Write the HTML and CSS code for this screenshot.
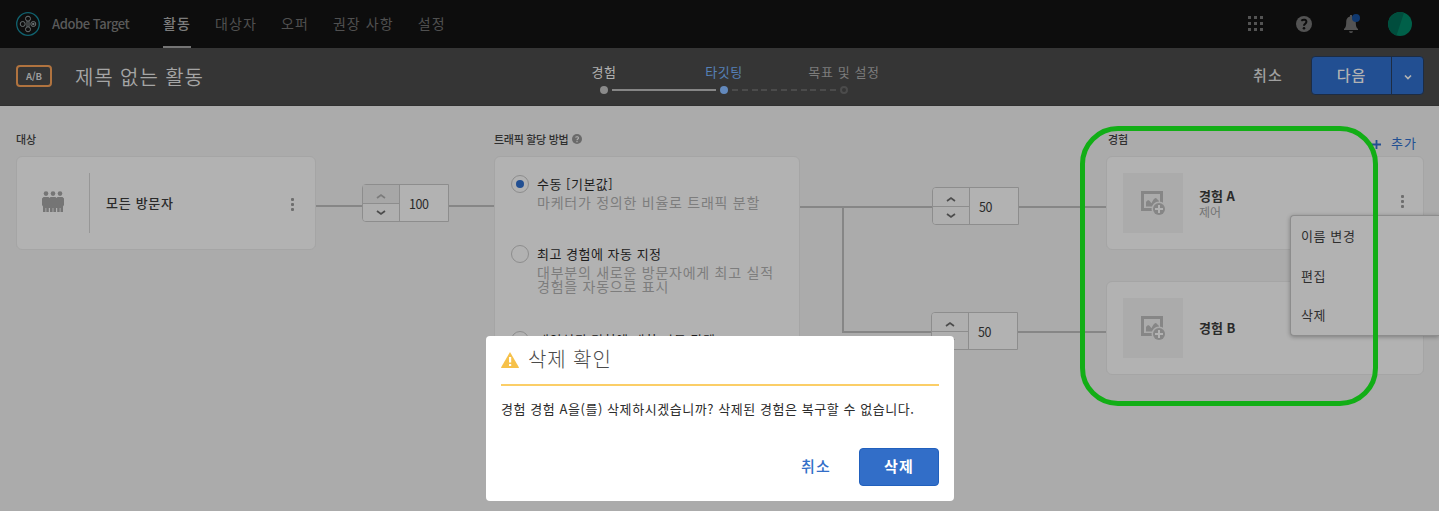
FILE: index.html
```html
<!DOCTYPE html>
<html lang="ko">
<head>
<meta charset="utf-8">
<title>Adobe Target</title>
<link rel="stylesheet" href="styles.css">
</head>
<body>
<header class="topbar">
  <svg class="logo" width="24" height="24" viewBox="0 0 24 24" fill="none">
    <circle cx="12" cy="12" r="11.3" stroke="#11626f" stroke-width="1.3"/>
    <g stroke="#6a7274" stroke-width="1"><circle cx="12" cy="6.700" r="2.500"/><circle cx="12" cy="17.300" r="2.500"/><circle cx="6.700" cy="12" r="2.500"/><circle cx="17.300" cy="12" r="2.500"/><path d="M11 9.200v5.600M13 9.200v5.600"/></g>
    <circle cx="17.300" cy="12" r="1.200" fill="#6a7274"/>
  </svg>
  <span class="product">Adobe Target</span>
  <nav class="nav">
    <a class="nav-item active">활동</a>
    <a class="nav-item">대상자</a>
    <a class="nav-item">오퍼</a>
    <a class="nav-item">권장 사항</a>
    <a class="nav-item">설정</a>
  </nav>
  <div class="tools">
    <svg width="16" height="16" viewBox="0 0 16 16" fill="#535353"><path d="M0 0h3v3H0zM6 0h3v3H6zM12 0h3v3h-3zM0 6h3v3H0zM6 6h3v3H6zM12 6h3v3h-3zM0 12h3v3H0zM6 12h3v3H6zM12 12h3v3h-3z"/></svg>
    <svg width="16" height="16" viewBox="0 0 16 16"><circle cx="8" cy="8" r="8" fill="#535353"/><path d="M5.300 4.700C7.200 3.100 10.400 3.300 10.400 5.800 10.400 7.700 8 7.700 8 9.700" fill="none" stroke="#0d0d0d" stroke-width="2"/><circle cx="8" cy="12.200" r="1.300" fill="#0d0d0d"/></svg>
    <svg class="bell" width="18" height="20" viewBox="0 0 18 20"><path d="M8 2.500c3.500 0 4.800 2.500 4.800 6 0 4 .8 5.200 2.200 6.500v1H1v-1c1.400-1.300 2.200-2.500 2.200-6.500 0-3.500 1.300-6 4.800-6zM6 17.300h4a2 1.800 0 0 1-4 0zM7 1h2v2H7z" fill="#535353"/><circle cx="13" cy="4" r="4" fill="#0f386f"/></svg>
    <svg width="24" height="24" viewBox="0 0 24 24"><circle cx="12" cy="12" r="12" fill="#006049"/><path d="M16 .7A12 12 0 1 0 8.500 23.500z" fill="#004d3d"/></svg>
  </div>
</header>

<section class="subbar">
  <span class="badge">A/B</span>
  <h1 class="title">제목 없는 활동</h1>
  <div class="steps">
    <div class="step done"><span>경험</span><i class="dot"></i></div>
    <div class="track"></div>
    <div class="step current"><span>타깃팅</span><i class="dot"></i></div>
    <div class="track dashed"></div>
    <div class="step todo"><span>목표 및 설정</span><i class="dot"></i></div>
  </div>
  <div class="actions">
    <span class="cancel">취소</span>
    <div class="split"><span class="next">다음</span><span class="caret"><svg width="8" height="6" viewBox="0 0 8 6"><path d="M1 1.500l3 3 3-3" fill="none" stroke="#b2b2b2" stroke-width="1.700"/></svg></span></div>
  </div>
</section>

<main class="flow">
  <section class="col audience">
    <div class="label">대상</div>
    <div class="card aud-card">
      <svg class="people" width="22" height="22" viewBox="0 0 22 22" fill="#757575"><circle cx="4" cy="2.600" r="2.300"/><circle cx="11" cy="2.600" r="2.300"/><circle cx="18" cy="2.600" r="2.300"/><path d="M1.500 6h5L7.500 7l1-1h5l1 1 1-1h5L22 7.500V14l-1 1.500V21h-2.500v-4h-.8v4H15.200v-4H14v4h-2.600v-4h-.8v4H8v-4H6.800v4H4.300v-4h-.8v4H1v-5.500L0 14V7.500z"/></svg>
      <span class="divider"></span>
      <span class="name">모든 방문자</span>
      <span class="kebab"><i></i><i></i><i></i></span>
    </div>
  </section>

  <div class="link first">
    <span class="line"></span>
    <div class="stepper max"><div class="arrows"><span><svg width="10" height="6" viewBox="0 0 10 6"><path d="M1 5l4-3 4 3"/></svg></span><span><svg width="10" height="6" viewBox="0 0 10 6"><path d="M1 1l4 3 4-3"/></svg></span></div><div class="value">100</div></div>
    <span class="line"></span>
  </div>

  <section class="col method">
    <div class="label"><span class="method-label">트래픽 할당 방법</span><svg width="10" height="10" viewBox="0 0 10 10"><circle cx="5" cy="5" r="5" fill="#6a6a6a"/><path d="M3.400 3.400C4.500 2.300 6.500 2.500 6.500 3.900 6.500 5 5 5 5 6.200M5 7v1.200" fill="none" stroke="#b2b2b2" stroke-width="1.100"/></svg></div>
    <div class="card method-card">
      <div class="option"><i class="radio on"></i><div><b>수동 [기본값]</b><p>마케터가 정의한 비율로 트래픽 분할</p></div></div>
      <div class="option second"><i class="radio"></i><div><b>최고 경험에 자동 지정</b><p>대부분의 새로운 방문자에게 최고 실적<br>경험을 자동으로 표시</p></div></div>
      <div class="option"><i class="radio"></i><div><b>개인설된 경험에 대한 자동 타겟</b></div></div>
    </div>
  </section>

  <div class="branches">
    <div class="link b1">
      <span class="line lead"></span>
      <div class="stepper"><div class="arrows"><span><svg width="10" height="6" viewBox="0 0 10 6"><path d="M1 5l4-3 4 3"/></svg></span><span><svg width="10" height="6" viewBox="0 0 10 6"><path d="M1 1l4 3 4-3"/></svg></span></div><div class="value">50</div></div>
      <span class="line"></span>
    </div>
    <div class="trunk"></div>
    <div class="link b2">
      <span class="elbow"></span>
      <div class="stepper"><div class="arrows"><span><svg width="10" height="6" viewBox="0 0 10 6"><path d="M1 5l4-3 4 3"/></svg></span><span><svg width="10" height="6" viewBox="0 0 10 6"><path d="M1 1l4 3 4-3"/></svg></span></div><div class="value">50</div></div>
      <span class="line"></span>
    </div>
  </div>

  <section class="col experiences">
    <div class="label">경험<span class="add"><svg width="9" height="9" viewBox="0 0 9 9"><path d="M4.500 0v9M0 4.500h9" stroke="#224f92" stroke-width="1.800"/></svg><span>추가</span></span></div>
    <div class="card exp">
      <div class="thumb"><svg width="24" height="24" viewBox="0 0 24 24"><path d="M1.500 1.500h19v17h-19z" fill="none" stroke="#868686" stroke-width="3"/><path d="M5 15.500v-4.500c1.500-2 3-2.500 4.500 0l1 1.200c1.500-3 3-5.700 4.500-5.200l3 3v3l-4 2.500z" fill="#868686"/><circle cx="18" cy="18" r="7.500" fill="#ababab"/><circle cx="18" cy="18" r="6" fill="#868686"/><path d="M18 14v8M14 18h8" stroke="#b2b2b2" stroke-width="2"/></svg></div>
      <div class="exp-text"><b>경험 A</b><small>제어</small></div>
      <span class="kebab"><i></i><i></i><i></i></span>
    </div>
    <div class="card exp">
      <div class="thumb"><svg width="24" height="24" viewBox="0 0 24 24"><path d="M1.500 1.500h19v17h-19z" fill="none" stroke="#868686" stroke-width="3"/><path d="M5 15.500v-4.500c1.500-2 3-2.500 4.500 0l1 1.200c1.500-3 3-5.700 4.500-5.200l3 3v3l-4 2.500z" fill="#868686"/><circle cx="18" cy="18" r="7.500" fill="#ababab"/><circle cx="18" cy="18" r="6" fill="#868686"/><path d="M18 14v8M14 18h8" stroke="#b2b2b2" stroke-width="2"/></svg></div>
      <div class="exp-text"><b>경험 B</b></div>
    </div>
  </section>
</main>

<div class="menu"><span>이름 변경</span><span>편집</span><span>삭제</span></div>
<div class="highlight"></div>

<div class="dialog">
  <div class="dialog-head">
    <svg width="18" height="16" viewBox="0 0 18 16"><path d="M9 0l9 15.500c0 .3-.2.500-.5.500H.5c-.3 0-.5-.2-.5-.5z" fill="#f6c14a"/><path d="M8 5h2.200v5.500H8zM8 12h2.200v2H8z" fill="#fff"/></svg>
    <h2>삭제 확인</h2>
  </div>
  <p class="dialog-text">경험 경험 A을(를) 삭제하시겠습니까? 삭제된 경험은 복구할 수 없습니다.</p>
  <div class="dialog-actions"><span class="dlg-cancel">취소</span><span class="dlg-delete">삭제</span></div>
</div>
</body>
</html>
```
FILE: styles.css
```css
* { box-sizing: border-box; }
body { margin: 0; width: 1439px; height: 511px; overflow: hidden; position: relative; background: #ababab; color: #2a2a2a; font: 13px/20px "Noto Sans CJK KR", "Noto Sans", sans-serif; white-space: nowrap; }
h1, h2, p { margin: 0; font-weight: 400; }
svg { display: block; flex: none; }

.topbar { height: 48px; background: #0d0d0d; display: flex; align-items: center; padding: 0 27px 0 16px; }
.product { margin-left: 12px; width: 111px; font-size: 13px; font-weight: 500; color: #5a5a5a; letter-spacing: -0.45px; }
.nav { display: flex; gap: 24px; height: 48px; font-size: 14px; line-height: 46px; color: #505050; }
.nav-item { display: block; letter-spacing: 1.1px; }
.nav-item.active { color: #7c7c7c; border-bottom: 2px solid #747474; font-weight: 500; }
.tools { margin-left: auto; display: flex; align-items: center; gap: 32px; }
.bell { margin: 0 -5px 0 -1px; }

.subbar { height: 58px; background: #353535; display: flex; align-items: center; padding: 0 15px 0 16px; border-bottom: 1px solid #303030; }
.badge { width: 36px; height: 22px; margin-top: -1px; border: 2px solid #b0733f; border-radius: 4px; color: #9d9d9d; font-size: 9.500px; font-weight: 700; line-height: 18px; text-align: center; letter-spacing: -0.1px; }
.title { margin: 0 0 0 23px; width: 525px; font-size: 20px; line-height: 30px; color: #a5a5a5; font-weight: 350; letter-spacing: 0.9px; }
.steps { display: flex; align-items: flex-end; height: 38px; margin-bottom: 0; }
.step { width: 8px; display: flex; flex-direction: column; align-items: center; font-size: 13px; letter-spacing: 0.6px; }
.step span { line-height: 20px; margin-bottom: 4px; }
.dot { width: 8px; height: 8px; border-radius: 50%; background: #8a8a8a; margin-bottom: 2px; }
.done { color: #b0b0b0; }
.current { color: #5681b9; }
.current .dot { background: #6389bd; }
.todo { color: #7c7c7c; }
.todo .dot { border: 2px solid #4b4b4b; background: none; }
.track { width: 104px; height: 2px; margin: 0 4px 5px; background: #868686; }
.track.dashed { background: repeating-linear-gradient(90deg, #4b4b4b 0 6px, transparent 6px 9.800px); }
.actions { margin-left: auto; display: flex; align-items: center; gap: 28px; margin-top: -2px; }
.cancel { font-size: 15px; font-weight: 500; color: #a0a0a0; letter-spacing: 1.2px; margin-top: -2px; }
.split { display: flex; width: 113px; height: 39px; border: 1px solid #1d2c43; border-radius: 4px; overflow: hidden; background: #224f92; color: #b2b2b2; }
.next { width: 80px; text-align: center; font-size: 15px; line-height: 36px; font-weight: 500; border-right: 1px solid #1d2c43; letter-spacing: 0.9px; }
.caret { flex: 1; display: grid; place-items: center; padding-top: 3px; }

.flow { display: grid; grid-template-columns: 300px 178px 306px 306px 318px; padding-left: 16px; }
.label { height: 50px; padding-top: 23px; display: flex; font-size: 11px; font-weight: 500; color: #2f2f2f; }
.label svg { margin: 5px 0 0 4px; }
.method-label { letter-spacing: -0.3px; }
.card { background: #b2b2b2; border: 1px solid #a5a5a5; border-radius: 6px; }
.aud-card { height: 94px; display: flex; align-items: center; padding: 0 21px 0 25px; }
.people { margin-top: -2px; }
.divider { width: 1px; height: 60px; margin: 0 16px 0 25px; background: #979797; }
.name { font-weight: 500; margin-top: -1px; letter-spacing: 0.7px; }
.kebab { margin-left: auto; display: flex; flex-direction: column; gap: 2px; padding-top: 2px; }
.kebab i { width: 3px; height: 3px; border-radius: 1px; background: #6e6e6e; }

.link { display: flex; align-items: flex-start; }
.first { padding-top: 78px; }
.line { flex: 1; height: 2px; background: #868686; margin-top: 19px; }
.first .line { margin-top: 21px; }
.first .line:first-child { flex: none; width: 46px; }
.stepper { width: 87px; height: 38px; display: flex; border: 1px solid #8d8d8d; border-radius: 4px 0 0 4px; background: #b2b2b2; }
.arrows { width: 37px; border-right: 1px solid #8d8d8d; background: #afafaf; display: grid; grid-template-rows: 19px 17px; border-radius: 3px 0 0 3px; }
.arrows span { display: grid; place-items: center; }
.arrows span:first-child { border-bottom: 1px solid #8d8d8d; padding-top: 3px; }
.arrows path { fill: none; stroke: #4c4c4c; stroke-width: 1.700; }
.max .arrows span:first-child { background: #a7a7a7; }
.max .arrows span:first-child path { stroke: #7c7c7c; }
.value { padding-left: 9px; line-height: 37px; font-size: 12.500px; letter-spacing: -0.5px; }
.branches { padding-top: 81px; display: flex; flex-direction: column; }
.lead { flex: none; width: 132px; }
.trunk { width: 2px; height: 87px; margin-left: 42px; background: #868686; }
.elbow { width: 89px; height: 21px; margin-left: 42px; border-left: 2px solid #868686; border-bottom: 2px solid #868686; }
.b1 { background: linear-gradient(#868686, #868686) 42px 19px / 2px 19px no-repeat; }

.method-card { height: 230px; padding: 18px 16px; overflow: hidden; }
.option { display: flex; gap: 8px; height: 70px; }
.option.second { height: 86px; }
.radio { flex: none; width: 18px; height: 18px; border: 1px solid #8d8d8d; border-radius: 50%; display: grid; place-items: center; }
.radio.on::after { content: ""; width: 8px; height: 8px; border-radius: 50%; background: #224f92; }
.option b { display: block; font-size: 13px; font-weight: 400; line-height: 18px; color: #1c1c1c; letter-spacing: 0.5px; }
.option p { font-size: 14px; line-height: 14px; color: #7d7d7d; margin-top: 2px; letter-spacing: 0.75px; }

.experiences .label { justify-content: space-between; padding-left: 2px; }
.add { display: flex; gap: 10px; font-size: 13px; color: #224f92; font-weight: 400; letter-spacing: 1px; margin: 4px 7px 0 0; }
.add svg { margin: 7px 0 0; }
.exp { height: 94px; margin-bottom: 31px; padding: 0 19px 0 16px; display: flex; align-items: center; }
.thumb { width: 60px; height: 60px; background: #ababab; display: grid; place-items: center; }
.exp-text { margin-left: 16px; display: flex; flex-direction: column; font-size: 13px; }
.exp-text b { font-weight: 700; line-height: 18px; }
.exp-text small { font-size: 12px; line-height: 14px; color: #747474; }
.exp .kebab { margin-top: -6px; }

.menu { position: absolute; left: 1290px; top: 215px; width: 149px; height: 121px; display: flex; flex-direction: column; padding-left: 10px; background: #b2b2b2; border: 1px solid #8d8d8d; border-right: 0; border-radius: 4px 0 0 4px; box-shadow: 0 1px 4px rgba(0,0,0,.3); font-size: 13px; line-height: 39px; letter-spacing: 0.6px; color: #2f2f2f; }
.menu span { height: 40px; }
.highlight { position: absolute; left: 1080px; top: 126px; width: 298px; height: 280px; border: 5px solid #12ae16; border-radius: 38px; }

.dialog { position: absolute; left: 486px; top: 336px; width: 468px; height: 165px; background: #fff; border-radius: 4px; padding: 0 15px; color: #2c2c2c; }
.dialog-head { height: 50px; border-bottom: 2px solid #fbce67; display: flex; align-items: center; gap: 9px; }
.dialog h2 { font-size: 20px; line-height: 30px; font-weight: 300; color: #4b4b4b; margin-top: -2px; letter-spacing: 0.9px; }
.dialog-text { padding-top: 13px; height: 62px; font-size: 13px; letter-spacing: 0.56px; }
.dialog-actions { display: flex; justify-content: flex-end; gap: 28px; font-size: 15px; line-height: 36px; letter-spacing: 1.2px; }
.dlg-cancel { color: #326ec8; font-weight: 500; }
.dlg-delete { width: 80px; height: 38px; border: 1px solid #2160bd; border-radius: 4px; background: #326ec8; color: #fff; font-weight: 700; text-align: center; line-height: 34px; }
```
